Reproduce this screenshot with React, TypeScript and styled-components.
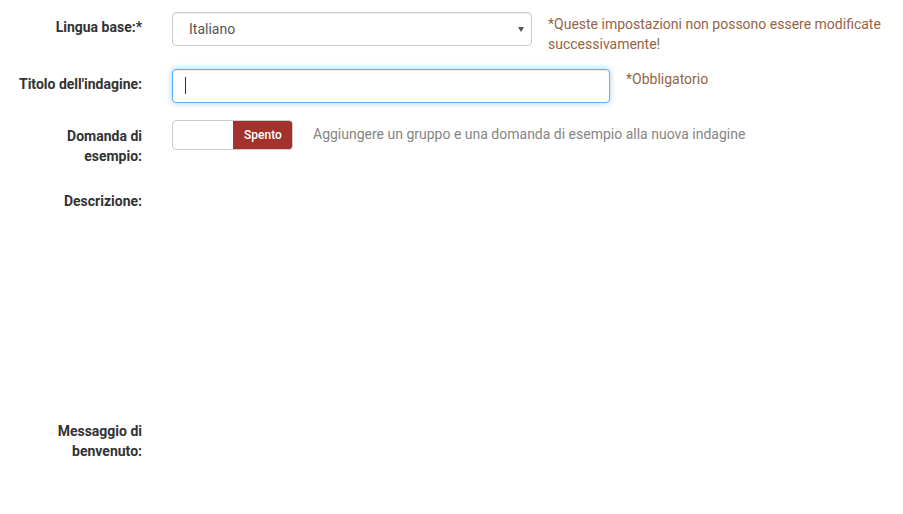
import React from "react";
import styled, { createGlobalStyle } from "styled-components";

const Global = createGlobalStyle`
  html, body { margin: 0; padding: 0; background: #fff; }
  body { font-family: Roboto, "Noto Sans", Arial, sans-serif; font-size: 14px; line-height: 20px; color: #333; }
  * { box-sizing: border-box; }
`;

const Page = styled.div`
  width: 903px;
  padding: 12px 15px 0 0;
`;

const Row = styled.div<{ $space: number }>`
  display: grid;
  grid-template-columns: 142px 1fr;
  column-gap: 30px;
  align-items: start;
  margin-bottom: ${(p) => p.$space}px;
`;

const Label = styled.label<{ $pt?: number }>`
  padding-left: 15px;
  padding-top: ${(p) => p.$pt ?? 5}px;
  text-align: right;
  font-weight: 700;
  font-size: 14px;
  line-height: 20px;
  color: #333;
`;

const Field = styled.div<{ $gap: number }>`
  display: flex;
  align-items: flex-start;
  gap: ${(p) => p.$gap}px;
  min-width: 0;
`;

const SelectWrap = styled.div`
  position: relative;
  width: 360px;
  flex: none;
`;

const Select = styled.select`
  appearance: none;
  -webkit-appearance: none;
  display: block;
  width: 100%;
  height: 34px;
  padding: 0 30px 0 16px;
  border: 1px solid #ccc;
  border-radius: 4px;
  background: #fff;
  font-family: Roboto, "Noto Sans", Arial, sans-serif;
  font-size: 14px;
  color: #555;
  box-shadow: inset 0 1px 1px rgba(0, 0, 0, 0.075);
  outline: none;
`;

const Arrow = styled.span`
  position: absolute;
  right: 8px;
  top: 15px;
  width: 0;
  height: 0;
  border-left: 3px solid transparent;
  border-right: 3px solid transparent;
  border-top: 5px solid #555;
  pointer-events: none;
`;

const Help = styled.div<{ $tone: "warn" | "muted"; $pt?: number }>`
  flex: 1;
  padding-top: ${(p) => p.$pt ?? 0}px;
  font-size: 14px;
  line-height: 20px;
  color: ${(p) => (p.$tone === "warn" ? "#956444" : "#858585")};
`;

const InputWrap = styled.div`
  position: relative;
  width: 438px;
  flex: none;
`;

const TextInput = styled.input`
  display: block;
  width: 100%;
  height: 34px;
  padding: 0 12px;
  border: 1px solid #66afe9;
  border-radius: 4px;
  font-family: Roboto, "Noto Sans", Arial, sans-serif;
  font-size: 14px;
  color: #555;
  outline: none;
  box-shadow: inset 0 1px 1px rgba(0, 0, 0, 0.075), 0 0 6px rgba(102, 175, 233, 0.6);
`;

const Caret = styled.span`
  position: absolute;
  left: 13px;
  top: 8px;
  width: 1px;
  height: 17px;
  background: #333;
  pointer-events: none;
`;

const Switch = styled.div`
  display: flex;
  flex: none;
  width: 121px;
  height: 30px;
  border: 1px solid #ccc;
  border-radius: 4px;
  overflow: hidden;
  background: #fff;
`;

const SwitchBlank = styled.span`
  width: 60px;
  flex: none;
`;

const SwitchOff = styled.span`
  flex: 1;
  display: flex;
  align-items: center;
  justify-content: center;
  background: #a3322c;
  color: #fff;
  font-size: 12px;
  font-weight: 500;
  margin: -1px -1px -1px 0;
`;

const EditorArea = styled.div<{ $h: number }>`
  min-height: ${(p) => p.$h}px;
`;

export default function App() {
  return (
    <>
      <Global />
      <Page>
        <Row $space={15}>
          <Label>Lingua base:*</Label>
          <Field $gap={16}>
            <SelectWrap>
              <Select defaultValue="it">
                <option value="it">Italiano</option>
              </Select>
              <Arrow />
            </SelectWrap>
            <Help $tone="warn" $pt={2}>
              *Queste impostazioni non possono essere modificate successivamente!
            </Help>
          </Field>
        </Row>
        <Row $space={17}>
          <Label>Titolo dell'indagine:</Label>
          <Field $gap={16}>
            <InputWrap>
              <TextInput type="text" />
              <Caret />
            </InputWrap>
            <Help $tone="warn" $pt={0}>*Obbligatorio</Help>
          </Field>
        </Row>
        <Row $space={20}>
          <Label $pt={6}>Domanda di esempio:</Label>
          <Field $gap={20}>
            <Switch>
              <SwitchBlank />
              <SwitchOff>Spento</SwitchOff>
            </Switch>
            <Help $tone="muted" $pt={4}>
              Aggiungere un gruppo e una domanda di esempio alla nuova indagine
            </Help>
          </Field>
        </Row>
        <Row $space={15}>
          <Label>Descrizione:</Label>
          <EditorArea $h={215} />
        </Row>
        <Row $space={0}>
          <Label>Messaggio di benvenuto:</Label>
          <EditorArea $h={40} />
        </Row>
      </Page>
    </>
  );
}
